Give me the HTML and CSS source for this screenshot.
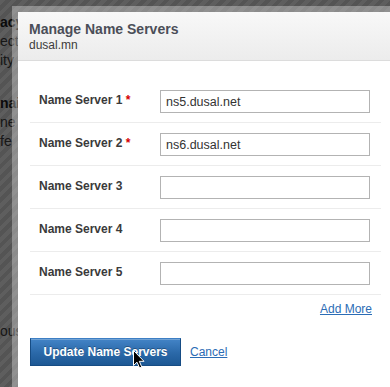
FILE: index.html
```html
<!DOCTYPE html>
<html>
<head>
<meta charset="UTF-8">
<title>Manage Name Servers</title>
<link rel="stylesheet" href="styles.css">
</head>
<body>
	<!-- page behind the dialog -->
	<div class="page">
		<p class="pg-head first">acy</p>
		<p class="pg-text">ect</p>
		<p class="pg-text">ity</p>
		<p class="pg-head second">nai</p>
		<p class="pg-text">ne</p>
		<p class="pg-text">fe</p>
		<p class="pg-text last">ous</p>
	</div>
	<div class="overlay"></div>

	<div class="modal">
		<div class="modal-head">
			<h3 class="modal-title">Manage Name Servers</h3>
			<div class="modal-sub">dusal.mn</div>
		</div>
		<div class="modal-body">
			<div class="ns-row">
				<label class="ns-label">Name Server 1 <span class="req">*</span></label>
				<input class="ns-input" type="text" value="ns5.dusal.net">
			</div>
			<div class="ns-row">
				<label class="ns-label">Name Server 2 <span class="req">*</span></label>
				<input class="ns-input" type="text" value="ns6.dusal.net">
			</div>
			<div class="ns-row">
				<label class="ns-label">Name Server 3</label>
				<input class="ns-input" type="text">
			</div>
			<div class="ns-row">
				<label class="ns-label">Name Server 4</label>
				<input class="ns-input" type="text">
			</div>
			<div class="ns-row">
				<label class="ns-label">Name Server 5</label>
				<input class="ns-input" type="text">
			</div>
			<div class="add-more"><a href="#">Add More</a></div>
			<div class="actions">
				<button class="btn-primary" type="button">Update Name Servers</button>
				<a href="#" class="cancel">Cancel</a>
			</div>
		</div>
	</div>

	<!-- mouse pointer -->
	<svg class="cursor" width="12" height="19" viewBox="0 0 12 19">
		<path d="M0.5 0.5 L0.5 15.5 L4 12.2 L6.6 18 L8.8 17 L6.3 11.3 L11 11.3 Z" fill="#000" stroke="#fff" stroke-width="1"/>
	</svg>
</body>
</html>
```

FILE: styles.css
```css
html,body{
	height: 100%;
}
body{
	margin: 0;
	background: #fff;
	font-family: "Liberation Sans", Arial, sans-serif;
	overflow: hidden;
}

/* 背景页面 */
.page{
	font-size: 14px;
	line-height: 18px;
	color: #444;
}
.page p{
	margin: 0;
	white-space: nowrap;
}
.pg-head{
	font-weight: bold;
	color: #222;
}
.first{
	padding-top: 13px;
}
.pg-text{
	margin-top: 1px !important;
}
.second{
	margin-top: 25px !important;
}
.last{
	margin-top: 172px !important;
}

.overlay{
	position: fixed;
	left: 0;
	top: 0;
	right: 0;
	bottom: 0;
	background: repeating-linear-gradient(135deg, rgba(0,0,0,0.63) 0 4px, rgba(0,0,0,0.67) 4px 8px);
}

/* 弹出框 */
.modal{
	position: absolute;
	left: 12px;
	top: 6px;
	width: 375px;
	height: 375px;
	border: 6px solid rgba(255,255,255,0.32);
	border-bottom: 0;
	background: #fff;
	background-clip: padding-box;
}
.modal-head{
	padding: 9px 11px 7px;
	background: linear-gradient(#f8f8f8, #ececec);
	border-bottom: 1px solid #dcdcdc;
}
.modal-title{
	margin: 0;
	font-size: 14px;
	line-height: 17px;
	font-weight: bold;
	color: #4b4e58;
}
.modal-sub{
	font-size: 12px;
	line-height: 15px;
	color: #3c3c3c;
}

.modal-body{
	padding: 19px 12px 0;
}
.ns-row{
	display: flex;
	align-items: flex-start;
	padding: 10px 0 9px;
	border-bottom: 1px solid #ececec;
}
.ns-label{
	width: 121px;
	padding: 3px 0 0 9px;
	font-size: 12px;
	line-height: 15px;
	font-weight: bold;
	color: #3a3a3a;
}
.req{
	color: #d40000;
}
.ns-input{
	box-sizing: border-box;
	width: 210px;
	height: 23px;
	margin: 0;
	padding: 0 5px;
	border: 1px solid #b3b3b3;
	border-radius: 0;
	font-family: "Liberation Sans", Arial, sans-serif;
	font-size: 12.5px;
	color: #333;
	outline: none;
}

.add-more{
	margin-top: 7px;
	padding-right: 9px;
	text-align: right;
	font-size: 12px;
	line-height: 15px;
}
a{
	color: #2b6cb5;
}

.actions{
	display: flex;
	align-items: center;
	gap: 9px;
	margin-top: 21px;
}
.btn-primary{
	box-sizing: border-box;
	width: 151px;
	height: 28px;
	margin: 0;
	padding: 0;
	border: 1px solid #164c84;
	border-top-color: #3d7fc4;
	background: linear-gradient(#4384c7, #2a68a8 55%, #1d5894);
	box-shadow: inset 0 1px 0 rgba(255,255,255,0.25);
	color: #fff;
	font-family: "Liberation Sans", Arial, sans-serif;
	font-size: 12px;
	font-weight: bold;
	text-shadow: 0 -1px 0 rgba(0,0,0,0.3);
}
.cancel{
	font-size: 12px;
	line-height: 15px;
}

.cursor{
	position: absolute;
	left: 133px;
	top: 350px;
}
```
